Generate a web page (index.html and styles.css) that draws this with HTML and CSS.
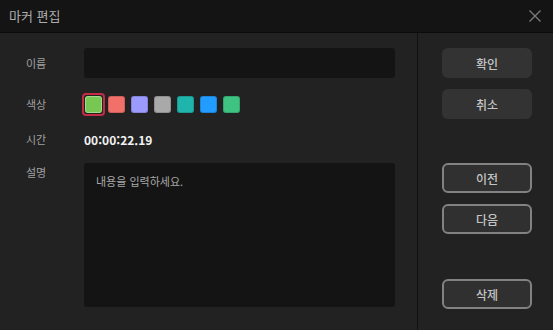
FILE: index.html
```html
<!DOCTYPE html>
<html lang="ko">
<head>
<meta charset="utf-8">
<title>마커 편집</title>
<link rel="stylesheet" href="styles.css">
</head>
<body>
<div class="dialog">
  <header class="titlebar">
    <span class="title">마커 편집</span>
    <button class="close" aria-label="닫기">
      <svg width="14" height="14" viewBox="0 0 14 14"><path d="M1.5 1.5 L12.5 12.5 M12.5 1.5 L1.5 12.5" stroke="#7a7a7a" stroke-width="1.4" fill="none"/></svg>
    </button>
  </header>
  <main class="content">
    <section class="form">
      <label class="label">이름</label>
      <div class="field"><div class="input"></div></div>

      <label class="label">색상</label>
      <div class="swatches">
        <span class="swatch-box selected"><span class="swatch" style="background:#76c852"></span></span>
        <span class="swatch-box"><span class="swatch" style="background:#f2706a"></span></span>
        <span class="swatch-box"><span class="swatch" style="background:#9b9bff"></span></span>
        <span class="swatch-box"><span class="swatch" style="background:#a9a9a9"></span></span>
        <span class="swatch-box"><span class="swatch" style="background:#1fb5ad"></span></span>
        <span class="swatch-box"><span class="swatch" style="background:#229cff"></span></span>
        <span class="swatch-box"><span class="swatch" style="background:#3ec383"></span></span>
      </div>

      <label class="label">시간</label>
      <div class="time">00:00:22.19</div>

      <label class="label top">설명</label>
      <div class="textarea">내용을 입력하세요.</div>
    </section>
    <aside class="actions">
      <button class="btn fill">확인</button>
      <button class="btn fill gap-s">취소</button>
      <button class="btn outline gap-l">이전</button>
      <button class="btn outline gap-s">다음</button>
      <button class="btn outline gap-xl">삭제</button>
    </aside>
  </main>
</div>
</body>
</html>
```

FILE: styles.css
```css
* { box-sizing: border-box; }
html, body { margin: 0; padding: 0; }
body {
  width: 553px;
  height: 330px;
  background: #222222;
  font-family: "Noto Sans CJK KR", "Noto Sans", sans-serif;
  overflow: hidden;
}
.dialog { display: flex; flex-direction: column; height: 330px; }
.titlebar {
  height: 33px;
  background: #141414;
  border-bottom: 1px solid #0c0c0c;
  display: flex;
  align-items: center;
  justify-content: space-between;
  padding: 0 9px 0 9px;
  flex: none;
}
.title { color: #adadad; font-size: 13px; line-height: 1; margin-top: -1px; }
.close {
  background: none; border: 0; padding: 0; width: 14px; height: 14px;
  display: flex; margin-right: 2px; margin-top: -1px;
}
.content { flex: 1; display: flex; }
.form {
  width: 418px;
  border-right: 1px solid #111111;
  padding: 15px 0 0 26px;
  display: grid;
  grid-template-columns: 58px 311px;
  grid-template-rows: 30px 23px 17px 144px;
  row-gap: 15px;
  align-items: center;
}
.label { color: #a0a0a0; font-size: 11px; line-height: 1; }
.label.top { align-self: start; padding-top: 4px; }
.input {
  height: 30px;
  background: #141414;
  border-radius: 3px;
}
.swatches { display: flex; margin-left: -2px; }
.swatch-box {
  width: 23px; height: 23px;
  display: flex; align-items: center; justify-content: center;
  border-radius: 4px;
}
.swatch-box.selected { border: 2px solid #c42c45; }
.swatch {
  width: 17px; height: 17px; border-radius: 3px;
  box-shadow: inset 0 0 0 1px rgba(0,0,0,0.15);
}
.selected .swatch { box-shadow: inset 0 0 0 1px rgba(255,255,255,0.35); }
.time { color: #f2f2f2; font-size: 12px; font-weight: 700; line-height: 1; }
.textarea {
  height: 144px;
  align-self: start;
  background: #141414;
  border-radius: 3px;
  color: #a8a8a8;
  font-size: 11px;
  line-height: 1;
  padding: 13px 0 0 12px;
}
.actions {
  flex: 1;
  display: flex;
  flex-direction: column;
  padding: 15px 0 0 24px;
}
.btn {
  width: 90px; height: 30px;
  border-radius: 6px;
  font-family: inherit;
  font-size: 12px;
  font-weight: 500;
  color: #c4c4c4;
  padding: 0;
  display: flex; align-items: center; justify-content: center;
}
.btn.fill { background: #333333; border: 0; }
.btn.outline { background: #303030; border: 2px solid #828282; }
.gap-s { margin-top: 11px; }
.gap-l { margin-top: 44px; }
.gap-xl { margin-top: 45px; }
```
